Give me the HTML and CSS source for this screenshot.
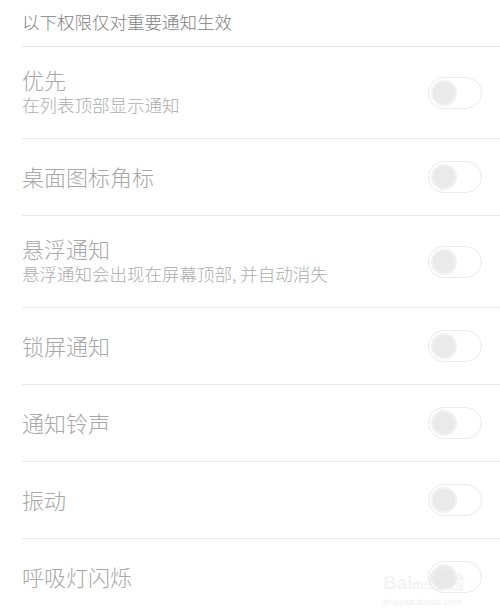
FILE: index.html
```html
<!DOCTYPE html>
<html lang="zh-CN">

<head>
	<meta charset="UTF-8">
	<meta name="viewport" content="width=device-width, initial-scale=1.0">
	<title>通知管理</title>
	<link rel="stylesheet" href="styles.css">
</head>

<body>
	<div class="page">
		<div class="section__title">以下权限仅对重要通知生效</div>

		<div class="item item--double">
			<div class="item__text">
				<div class="item__name">优先</div>
				<div class="item__desc">在列表顶部显示通知</div>
			</div>
			<span class="switch"></span>
		</div>

		<div class="item">
			<div class="item__text">
				<div class="item__name">桌面图标角标</div>
			</div>
			<span class="switch"></span>
		</div>

		<div class="item item--double">
			<div class="item__text">
				<div class="item__name">悬浮通知</div>
				<div class="item__desc">悬浮通知会出现在屏幕顶部, 并自动消失</div>
			</div>
			<span class="switch"></span>
		</div>

		<div class="item">
			<div class="item__text">
				<div class="item__name">锁屏通知</div>
			</div>
			<span class="switch"></span>
		</div>

		<div class="item">
			<div class="item__text">
				<div class="item__name">通知铃声</div>
			</div>
			<span class="switch"></span>
		</div>

		<div class="item">
			<div class="item__text">
				<div class="item__name">振动</div>
			</div>
			<span class="switch"></span>
		</div>

		<div class="item">
			<div class="item__text">
				<div class="item__name">呼吸灯闪烁</div>
			</div>
			<span class="switch"></span>
		</div>
	</div>

	<!-- watermark of the source site -->
	<div class="watermark">
		<span class="watermark__logo">Bai<b>du</b>经验</span>
		<span class="watermark__url">jingyan.baidu.com</span>
	</div>
</body>

</html>
```

FILE: styles.css
```css
html,
body {
	margin: 0;
	background: #fff;
	overflow: hidden;
}

body {
	font-family: "Noto Sans CJK SC", "Noto Sans", sans-serif;
	font-weight: 300;
}

.page {
	width: 500px;
}

.section__title {
	height: 46px;
	line-height: 43px;
	padding-left: 22px;
	font-size: 17.5px;
	color: #828282;
}

.item {
	display: flex;
	align-items: center;
	margin-left: 22px;
	padding-right: 18px;
	min-height: 76px;
	border-top: 1px solid #e8e8e8;
}

.item--double {
	min-height: 91px;
}

.item__text {
	flex: 1;
	padding-bottom: 3px;
}

.item__name {
	font-size: 22px;
	line-height: 28px;
	color: #a8a8a8;
}

.item__desc {
	font-size: 17.5px;
	line-height: 24px;
	color: #adadad;
}

.switch {
	position: relative;
	box-sizing: border-box;
	width: 54px;
	height: 32px;
	border: 1px solid #ebebeb;
	border-radius: 16px;
	background: #fff;
}

.switch::after {
	content: '';
	position: absolute;
	left: 2px;
	top: 2px;
	box-sizing: border-box;
	width: 26px;
	height: 26px;
	border-radius: 50%;
	background: #eaeaea;
	border: 2px solid #f1f1f1;
}

.watermark {
	position: absolute;
	left: 383px;
	top: 572px;
	display: flex;
	flex-direction: column;
	opacity: 0.4;
	color: #e4e4e4;
}

.watermark__logo {
	font-family: "Liberation Sans", sans-serif;
	font-size: 19px;
	line-height: 22px;
	font-weight: bold;
}

.watermark__logo b {
	font-size: 12px;
}

.watermark__url {
	font-family: "Liberation Sans", sans-serif;
	font-size: 9px;
	line-height: 12px;
	font-weight: bold;
}
```
